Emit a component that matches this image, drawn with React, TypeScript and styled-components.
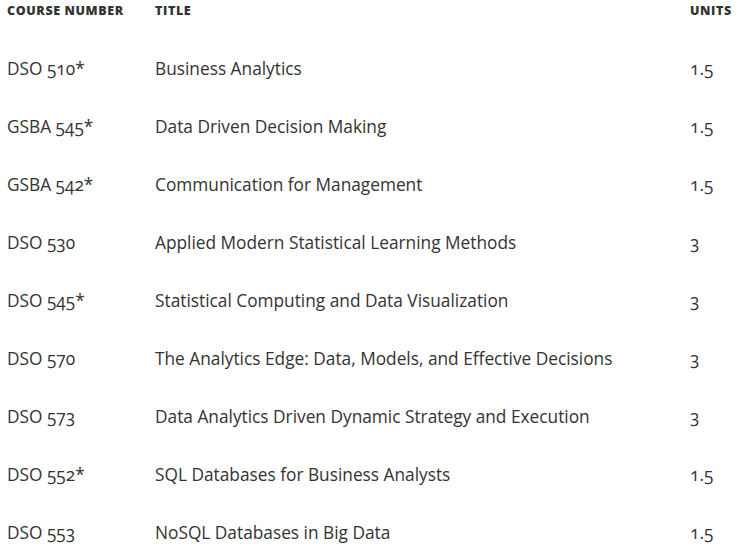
import React from "react";
import styled, { createGlobalStyle } from "styled-components";

const Global = createGlobalStyle`
  html, body { margin: 0; padding: 0; background: #fff; }
  body { font-family: "Open Sans", "Noto Sans", sans-serif; color: #333; }
`;

const Table = styled.div`
  display: grid;
  grid-template-columns: 148px 535px 1fr;
  padding: 0 0 0 7px;
`;

const Head = styled.div`
  font-family: "Open Sans", sans-serif;
  font-weight: 800;
  font-size: 12.5px;
  letter-spacing: 0.6px;
  text-transform: uppercase;
  color: #333;
  height: 22px;
  line-height: 22px;
  padding-bottom: 37px;
`;

const Cell = styled.div`
  font-size: 17.3px;
  line-height: 20px;
  height: 58px;
  color: #333;
  font-variant-numeric: oldstyle-nums;
`;

const rows: [string, string, string][] = [
  ["DSO 510*", "Business Analytics", "1.5"],
  ["GSBA 545*", "Data Driven Decision Making", "1.5"],
  ["GSBA 542*", "Communication for Management", "1.5"],
  ["DSO 530", "Applied Modern Statistical Learning Methods", "3"],
  ["DSO 545*", "Statistical Computing and Data Visualization", "3"],
  ["DSO 570", "The Analytics Edge: Data, Models, and Effective Decisions", "3"],
  ["DSO 573", "Data Analytics Driven Dynamic Strategy and Execution", "3"],
  ["DSO 552*", "SQL Databases for Business Analysts", "1.5"],
  ["DSO 553", "NoSQL Databases in Big Data", "1.5"],
];

export default function App() {
  return (
    <>
      <Global />
      <Table>
        <Head>Course Number</Head>
        <Head>Title</Head>
        <Head>Units</Head>
        {rows.map((r) => (
          <React.Fragment key={r[0]}>
            <Cell>{r[0]}</Cell>
            <Cell>{r[1]}</Cell>
            <Cell>{r[2]}</Cell>
          </React.Fragment>
        ))}
      </Table>
    </>
  );
}
